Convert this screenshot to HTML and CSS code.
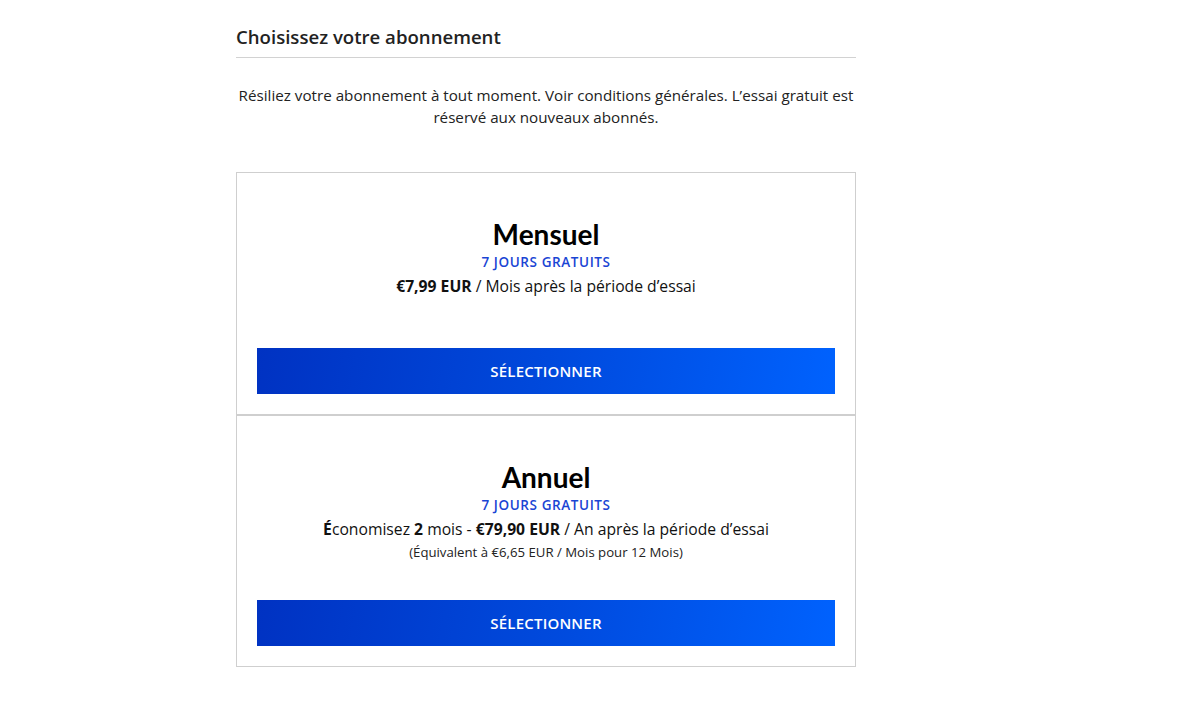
FILE: index.html
```html
<!doctype html>
<html lang="fr">
<head>
    <meta charset="UTF-8">
    <meta name="viewport" content="width=device-width, initial-scale=1.0">
    <title>Choisissez votre abonnement</title>
    <link rel="stylesheet" href="styles.css">
</head>
<body>
<div class="wrapper-plans">
    <h2 class="plans-title">Choisissez votre abonnement</h2>

    <p class="plans-intro">
        Résiliez votre abonnement à tout moment. Voir conditions générales. L’essai gratuit est
        réservé aux nouveaux abonnés.
    </p>

    <div class="plans">
        <section class="plan plan_monthly">
            <div class="plan-info">
                <h3 class="plan-name">Mensuel</h3>
                <div class="plan-trial">7 jours gratuits</div>
                <div class="plan-price"><b>€7,99 EUR</b> / Mois après la période d’essai</div>
            </div>
            <button type="button" class="plan-select">Sélectionner</button>
        </section>

        <section class="plan plan_yearly">
            <div class="plan-info">
                <h3 class="plan-name">Annuel</h3>
                <div class="plan-trial">7 jours gratuits</div>
                <div class="plan-price"><b>É</b>conomisez <b>2</b> mois - <b>€79,90 EUR</b> / An après la période d’essai</div>
                <div class="plan-note">(Équivalent à €6,65 EUR / Mois pour 12 Mois)</div>
            </div>
            <button type="button" class="plan-select">Sélectionner</button>
        </section>
    </div>
</div>
</body>
</html>
```

FILE: styles.css
```css
body {
    margin: 0;
    background: #fff;
    color: #111;
    font-family: "Open Sans", "Noto Sans", sans-serif;
}

.wrapper-plans {
    width: 620px;
    margin-left: 236px;
    padding-top: 24px;
}

.plans-title {
    margin: 0;
    padding-bottom: 7px;
    border-bottom: 1px solid #d2d2d2;
    font-size: 18.6px;
    font-weight: 600;
    line-height: 26px;
    color: #222;
}

.plans-intro {
    margin: 26px 0 0;
    text-align: center;
    font-size: 15.2px;
    line-height: 22px;
    color: #222;
}

.plans {
    margin-top: 44px;
}

.plan {
    border: 1px solid #cfcfcf;
    padding: 44px 20px 20px;
    text-align: center;
}

.plan + .plan {
    border-top: 0;
}

.plan_monthly .plan-info {
    padding-bottom: 51px;
}

.plan_yearly {
    box-shadow: inset 0 1px 0 #cfcfcf;
    padding-top: 45px;
}

.plan_yearly .plan-info {
    padding-bottom: 39px;
}

.plan-name {
    margin: 0;
    font-family: Lato, "Open Sans", sans-serif;
    font-size: 28px;
    font-weight: 700;
    line-height: 34px;
    color: #000;
}

.plan-trial {
    margin-top: 2px;
    font-size: 13.5px;
    font-weight: 600;
    line-height: 18px;
    letter-spacing: 0.6px;
    text-transform: uppercase;
    color: #1a45d4;
}

.plan-price {
    margin-top: 4px;
    font-size: 15.7px;
    line-height: 22px;
    color: #111;
}

.plan-price b {
    font-weight: 700;
}

.plan-note {
    margin-top: 3px;
    font-size: 13.2px;
    line-height: 18px;
    color: #222;
}

.plan-select {
    display: block;
    width: 100%;
    height: 46px;
    border: 0;
    background: linear-gradient(100deg, #0032c2 0%, #0049dc 50%, #0062fe 100%);
    color: #fff;
    font-family: "Open Sans", sans-serif;
    font-size: 15px;
    font-weight: 600;
    letter-spacing: 0.2px;
    text-transform: uppercase;
    cursor: pointer;
}
```
